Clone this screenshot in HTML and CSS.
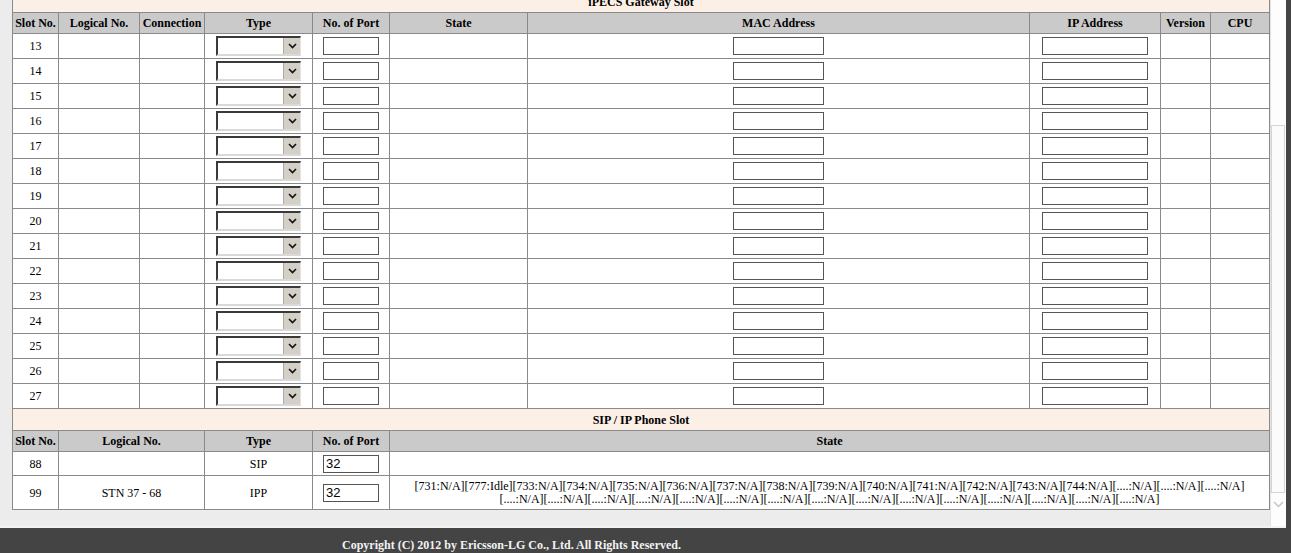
FILE: index.html
```html
<html>
  <head>
    <link rel="stylesheet" href="styles.css">
  </head>
  <body>
    <div id="frame">
      <div id="view">
        <table id="slots">
          <colgroup>
            <col style="width:46px"><col style="width:81px"><col style="width:65px"><col style="width:108px"><col style="width:77px">
            <col style="width:138px"><col style="width:502px"><col style="width:131px"><col style="width:50px"><col style="width:59px">
          </colgroup>
          <tr class="title"><td colspan="10">iPECS Gateway Slot</td></tr>
          <tr class="head">
            <th>Slot No.</th><th>Logical No.</th><th>Connection</th><th>Type</th><th>No. of Port</th>
            <th>State</th><th>MAC Address</th><th>IP Address</th><th>Version</th><th>CPU</th>
          </tr>
          <tr class="row"><td>13</td><td></td><td></td><td><span class="combo"><select></select><span class="btn"><svg width="9" height="6" viewBox="0 0 9 6"><path d="M1 1l3.5 3.5L8 1" fill="none" stroke="#111" stroke-width="1.6"/></svg></span></span></td><td><input type="text" class="port"></td><td></td><td><input type="text" class="mac"></td><td><input type="text" class="ip"></td><td></td><td></td></tr>
          <tr class="row"><td>14</td><td></td><td></td><td><span class="combo"><select></select><span class="btn"><svg width="9" height="6" viewBox="0 0 9 6"><path d="M1 1l3.5 3.5L8 1" fill="none" stroke="#111" stroke-width="1.6"/></svg></span></span></td><td><input type="text" class="port"></td><td></td><td><input type="text" class="mac"></td><td><input type="text" class="ip"></td><td></td><td></td></tr>
          <tr class="row"><td>15</td><td></td><td></td><td><span class="combo"><select></select><span class="btn"><svg width="9" height="6" viewBox="0 0 9 6"><path d="M1 1l3.5 3.5L8 1" fill="none" stroke="#111" stroke-width="1.6"/></svg></span></span></td><td><input type="text" class="port"></td><td></td><td><input type="text" class="mac"></td><td><input type="text" class="ip"></td><td></td><td></td></tr>
          <tr class="row"><td>16</td><td></td><td></td><td><span class="combo"><select></select><span class="btn"><svg width="9" height="6" viewBox="0 0 9 6"><path d="M1 1l3.5 3.5L8 1" fill="none" stroke="#111" stroke-width="1.6"/></svg></span></span></td><td><input type="text" class="port"></td><td></td><td><input type="text" class="mac"></td><td><input type="text" class="ip"></td><td></td><td></td></tr>
          <tr class="row"><td>17</td><td></td><td></td><td><span class="combo"><select></select><span class="btn"><svg width="9" height="6" viewBox="0 0 9 6"><path d="M1 1l3.5 3.5L8 1" fill="none" stroke="#111" stroke-width="1.6"/></svg></span></span></td><td><input type="text" class="port"></td><td></td><td><input type="text" class="mac"></td><td><input type="text" class="ip"></td><td></td><td></td></tr>
          <tr class="row"><td>18</td><td></td><td></td><td><span class="combo"><select></select><span class="btn"><svg width="9" height="6" viewBox="0 0 9 6"><path d="M1 1l3.5 3.5L8 1" fill="none" stroke="#111" stroke-width="1.6"/></svg></span></span></td><td><input type="text" class="port"></td><td></td><td><input type="text" class="mac"></td><td><input type="text" class="ip"></td><td></td><td></td></tr>
          <tr class="row"><td>19</td><td></td><td></td><td><span class="combo"><select></select><span class="btn"><svg width="9" height="6" viewBox="0 0 9 6"><path d="M1 1l3.5 3.5L8 1" fill="none" stroke="#111" stroke-width="1.6"/></svg></span></span></td><td><input type="text" class="port"></td><td></td><td><input type="text" class="mac"></td><td><input type="text" class="ip"></td><td></td><td></td></tr>
          <tr class="row"><td>20</td><td></td><td></td><td><span class="combo"><select></select><span class="btn"><svg width="9" height="6" viewBox="0 0 9 6"><path d="M1 1l3.5 3.5L8 1" fill="none" stroke="#111" stroke-width="1.6"/></svg></span></span></td><td><input type="text" class="port"></td><td></td><td><input type="text" class="mac"></td><td><input type="text" class="ip"></td><td></td><td></td></tr>
          <tr class="row"><td>21</td><td></td><td></td><td><span class="combo"><select></select><span class="btn"><svg width="9" height="6" viewBox="0 0 9 6"><path d="M1 1l3.5 3.5L8 1" fill="none" stroke="#111" stroke-width="1.6"/></svg></span></span></td><td><input type="text" class="port"></td><td></td><td><input type="text" class="mac"></td><td><input type="text" class="ip"></td><td></td><td></td></tr>
          <tr class="row"><td>22</td><td></td><td></td><td><span class="combo"><select></select><span class="btn"><svg width="9" height="6" viewBox="0 0 9 6"><path d="M1 1l3.5 3.5L8 1" fill="none" stroke="#111" stroke-width="1.6"/></svg></span></span></td><td><input type="text" class="port"></td><td></td><td><input type="text" class="mac"></td><td><input type="text" class="ip"></td><td></td><td></td></tr>
          <tr class="row"><td>23</td><td></td><td></td><td><span class="combo"><select></select><span class="btn"><svg width="9" height="6" viewBox="0 0 9 6"><path d="M1 1l3.5 3.5L8 1" fill="none" stroke="#111" stroke-width="1.6"/></svg></span></span></td><td><input type="text" class="port"></td><td></td><td><input type="text" class="mac"></td><td><input type="text" class="ip"></td><td></td><td></td></tr>
          <tr class="row"><td>24</td><td></td><td></td><td><span class="combo"><select></select><span class="btn"><svg width="9" height="6" viewBox="0 0 9 6"><path d="M1 1l3.5 3.5L8 1" fill="none" stroke="#111" stroke-width="1.6"/></svg></span></span></td><td><input type="text" class="port"></td><td></td><td><input type="text" class="mac"></td><td><input type="text" class="ip"></td><td></td><td></td></tr>
          <tr class="row"><td>25</td><td></td><td></td><td><span class="combo"><select></select><span class="btn"><svg width="9" height="6" viewBox="0 0 9 6"><path d="M1 1l3.5 3.5L8 1" fill="none" stroke="#111" stroke-width="1.6"/></svg></span></span></td><td><input type="text" class="port"></td><td></td><td><input type="text" class="mac"></td><td><input type="text" class="ip"></td><td></td><td></td></tr>
          <tr class="row"><td>26</td><td></td><td></td><td><span class="combo"><select></select><span class="btn"><svg width="9" height="6" viewBox="0 0 9 6"><path d="M1 1l3.5 3.5L8 1" fill="none" stroke="#111" stroke-width="1.6"/></svg></span></span></td><td><input type="text" class="port"></td><td></td><td><input type="text" class="mac"></td><td><input type="text" class="ip"></td><td></td><td></td></tr>
          <tr class="row"><td>27</td><td></td><td></td><td><span class="combo"><select></select><span class="btn"><svg width="9" height="6" viewBox="0 0 9 6"><path d="M1 1l3.5 3.5L8 1" fill="none" stroke="#111" stroke-width="1.6"/></svg></span></span></td><td><input type="text" class="port"></td><td></td><td><input type="text" class="mac"></td><td><input type="text" class="ip"></td><td></td><td></td></tr>

          <tr class="title"><td colspan="10">SIP / IP Phone Slot</td></tr>
          <tr class="head">
            <th>Slot No.</th><th colspan="2">Logical No.</th><th>Type</th><th>No. of Port</th><th colspan="5">State</th>
          </tr>
          <tr class="sip"><td>88</td><td colspan="2"></td><td>SIP</td><td><input type="text" class="port" value="32"></td><td colspan="5"></td></tr>
          <tr class="ipp">
            <td>99</td><td colspan="2">STN 37 - 68</td><td>IPP</td><td><input type="text" class="port" value="32"></td>
            <td colspan="5" class="state">[731:N/A][777:Idle][733:N/A][734:N/A][735:N/A][736:N/A][737:N/A][738:N/A][739:N/A][740:N/A][741:N/A][742:N/A][743:N/A][744:N/A][....:N/A][....:N/A][....:N/A]<br>[....:N/A][....:N/A][....:N/A][....:N/A][....:N/A][....:N/A][....:N/A][....:N/A][....:N/A][....:N/A][....:N/A][....:N/A][....:N/A][....:N/A][....:N/A]</td>
          </tr>
        </table>
      </div>
      <div id="scroll">
        <div class="thumb"></div>
        <div class="arrow"><svg width="11" height="7" viewBox="0 0 11 7"><path d="M1 1l4.5 4.5L10 1" fill="none" stroke="#c4c4c4" stroke-width="1.5"/></svg></div>
      </div>
    </div>
    <div id="footer">Copyright (C) 2012 by Ericsson-LG Co., Ltd. All Rights Reserved.</div>
  </body>
</html>
```

FILE: styles.css
```css
body{
    margin: 0;
    background: #444444;
    font-family: "Liberation Serif", "Times New Roman", serif;
    font-size: 12px;
    color: #000;
}
#frame{
    display: flex;
    height: 526px;
    margin-right: 5px;
    border-bottom: 2px solid #f3f3f3;
}
#view{
    flex: 1;
    overflow: hidden;
    background: #ececec;
    padding-left: 12px;
}
#slots{
    border-collapse: collapse;
    table-layout: fixed;
    width: 1258px;
    margin-top: -10px;
    background: #fff;
    font-family: "Liberation Serif", "Times New Roman", serif;
    font-size: 12px;
}
#slots td,
#slots th{
    border: 1px solid #8a8a8a;
    padding: 0 1px;
    text-align: center;
    white-space: nowrap;
    vertical-align: middle;
    font-size: 12px;
    line-height: 14px;
}
#slots th{
    background: #cacaca;
    font-weight: bold;
    height: 21px;
}
.title td{
    background: #fbefe6;
    font-weight: bold;
    height: 22px;
}
.row td{
    height: 25px;
}
.sip td{
    height: 24px;
}
.ipp td{
    height: 34px;
}
#slots .state{
    line-height: 13px;
}
.combo{
    display: inline-flex;
    vertical-align: middle;
    box-sizing: border-box;
    width: 85px;
    height: 20px;
    border-top: 2px solid #3a3a3a;
    border-left: 2px solid #3a3a3a;
    border-right: 1px solid #e4e4e4;
    border-bottom: 2px solid #d9d9d9;
    background: #fff;
}
.combo select{
    appearance: none;
    -webkit-appearance: none;
    flex: 1;
    min-width: 0;
    border: none;
    background: #fff;
    padding: 0;
    margin: 0;
}
.combo .btn{
    display: flex;
    align-items: center;
    justify-content: center;
    box-sizing: border-box;
    width: 17px;
    background: #d4d0c8;
    border-left: 1px solid #b0aca5;
}
input{
    box-sizing: border-box;
    height: 18px;
    border: 1px solid #555;
    padding: 0 2px;
    margin: 0;
    vertical-align: middle;
    font-family: "Liberation Sans", Arial, sans-serif;
    font-size: 13px;
}
.port{
    width: 56px;
}
.mac{
    width: 91px;
}
.ip{
    width: 106px;
}
#scroll{
    width: 16px;
    box-sizing: border-box;
    border-left: 1px solid #e2e2e2;
    background: #fdfdfd;
    display: flex;
    flex-direction: column;
}
#scroll .thumb{
    margin-top: 125px;
    height: 368px;
    box-sizing: border-box;
    margin-right: 1px;
    border: 1px solid #d4d4d4;
    background: #fbfbfb;
}
#scroll .arrow{
    display: flex;
    justify-content: center;
    padding-top: 8px;
}
#footer{
    color: #f2f2f2;
    font-weight: bold;
    padding: 10px 0 0 342px;
    line-height: 14px;
}
```
